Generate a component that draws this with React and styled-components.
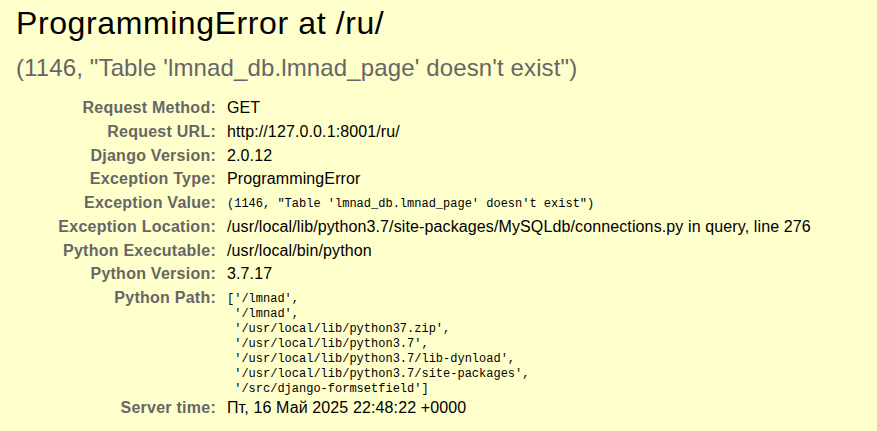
import React from 'react';
import styled, { createGlobalStyle } from 'styled-components';

const GlobalStyle = createGlobalStyle`
  html,
  body {
    margin: 0;
    padding: 0;
    background: #ffc;
  }

  body {
    font-family: 'Liberation Sans', Arial, sans-serif;
    color: #000;
  }
`;

const Summary = styled.div`
  padding: 5px 16px 0;
  background: #ffc;
  min-height: 100vh;
  box-sizing: border-box;
`;

const Title = styled.h1`
  margin: 0;
  font-size: 32px;
  line-height: 37px;
  font-weight: normal;
  letter-spacing: 0.6px;
`;

const Subtitle = styled.h2`
  margin: 12px 0 0;
  font-size: 24px;
  line-height: 28px;
  font-weight: normal;
  letter-spacing: 0.13px;
  color: #666;
`;

const Meta = styled.div`
  margin-top: 14.5px;
  display: flex;
  flex-direction: column;
`;

const Row = styled.div`
  display: grid;
  grid-template-columns: 200px 1fr;
  column-gap: 10px;
  align-items: start;
`;

const Label = styled.div`
  padding: 2.5px 0;
  text-align: right;
  font-size: 16px;
  line-height: 18.75px;
  font-weight: bold;
  letter-spacing: 0.25px;
  color: #666;
  white-space: nowrap;
`;

const Value = styled.div`
  padding: 2.5px 0 2.5px 1px;
  font-size: 16px;
  line-height: 18.75px;
  letter-spacing: 0.12px;
  white-space: nowrap;
`;

const Code = styled.pre`
  margin: 0;
  padding: 5px 0 0 1px;
  min-height: ${props => (props.multiline ? 'auto' : '18.75px')};
  font-family: 'Liberation Mono', 'DejaVu Sans Mono', monospace;
  font-size: 12px;
  line-height: 15px;
  white-space: pre;
`;

const pythonPath = [
  "['/lmnad',",
  " '/lmnad',",
  " '/usr/local/lib/python37.zip',",
  " '/usr/local/lib/python3.7',",
  " '/usr/local/lib/python3.7/lib-dynload',",
  " '/usr/local/lib/python3.7/site-packages',",
  " '/src/django-formsetfield']",
].join('\n');

const rows = [
  { label: 'Request Method:', value: 'GET' },
  { label: 'Request URL:', value: 'http://127.0.0.1:8001/ru/' },
  { label: 'Django Version:', value: '2.0.12' },
  { label: 'Exception Type:', value: 'ProgrammingError' },
  {
    label: 'Exception Value:',
    value: `(1146, "Table 'lmnad_db.lmnad_page' doesn't exist")`,
    code: true,
  },
  {
    label: 'Exception Location:',
    value:
      '/usr/local/lib/python3.7/site-packages/MySQLdb/connections.py in query, line 276',
  },
  { label: 'Python Executable:', value: '/usr/local/bin/python' },
  { label: 'Python Version:', value: '3.7.17' },
  { label: 'Python Path:', value: pythonPath, code: true, multiline: true },
  { label: 'Server time:', value: 'Пт, 16 Май 2025 22:48:22 +0000' },
];

export default () => (
  <Summary>
    <GlobalStyle />
    <Title>ProgrammingError at /ru/</Title>
    <Subtitle>(1146, "Table 'lmnad_db.lmnad_page' doesn't exist")</Subtitle>
    <Meta>
      {rows.map(row => (
        <Row key={row.label}>
          <Label>{row.label}</Label>
          {row.code ? (
            <Code multiline={row.multiline}>{row.value}</Code>
          ) : (
            <Value>{row.value}</Value>
          )}
        </Row>
      ))}
    </Meta>
  </Summary>
);
